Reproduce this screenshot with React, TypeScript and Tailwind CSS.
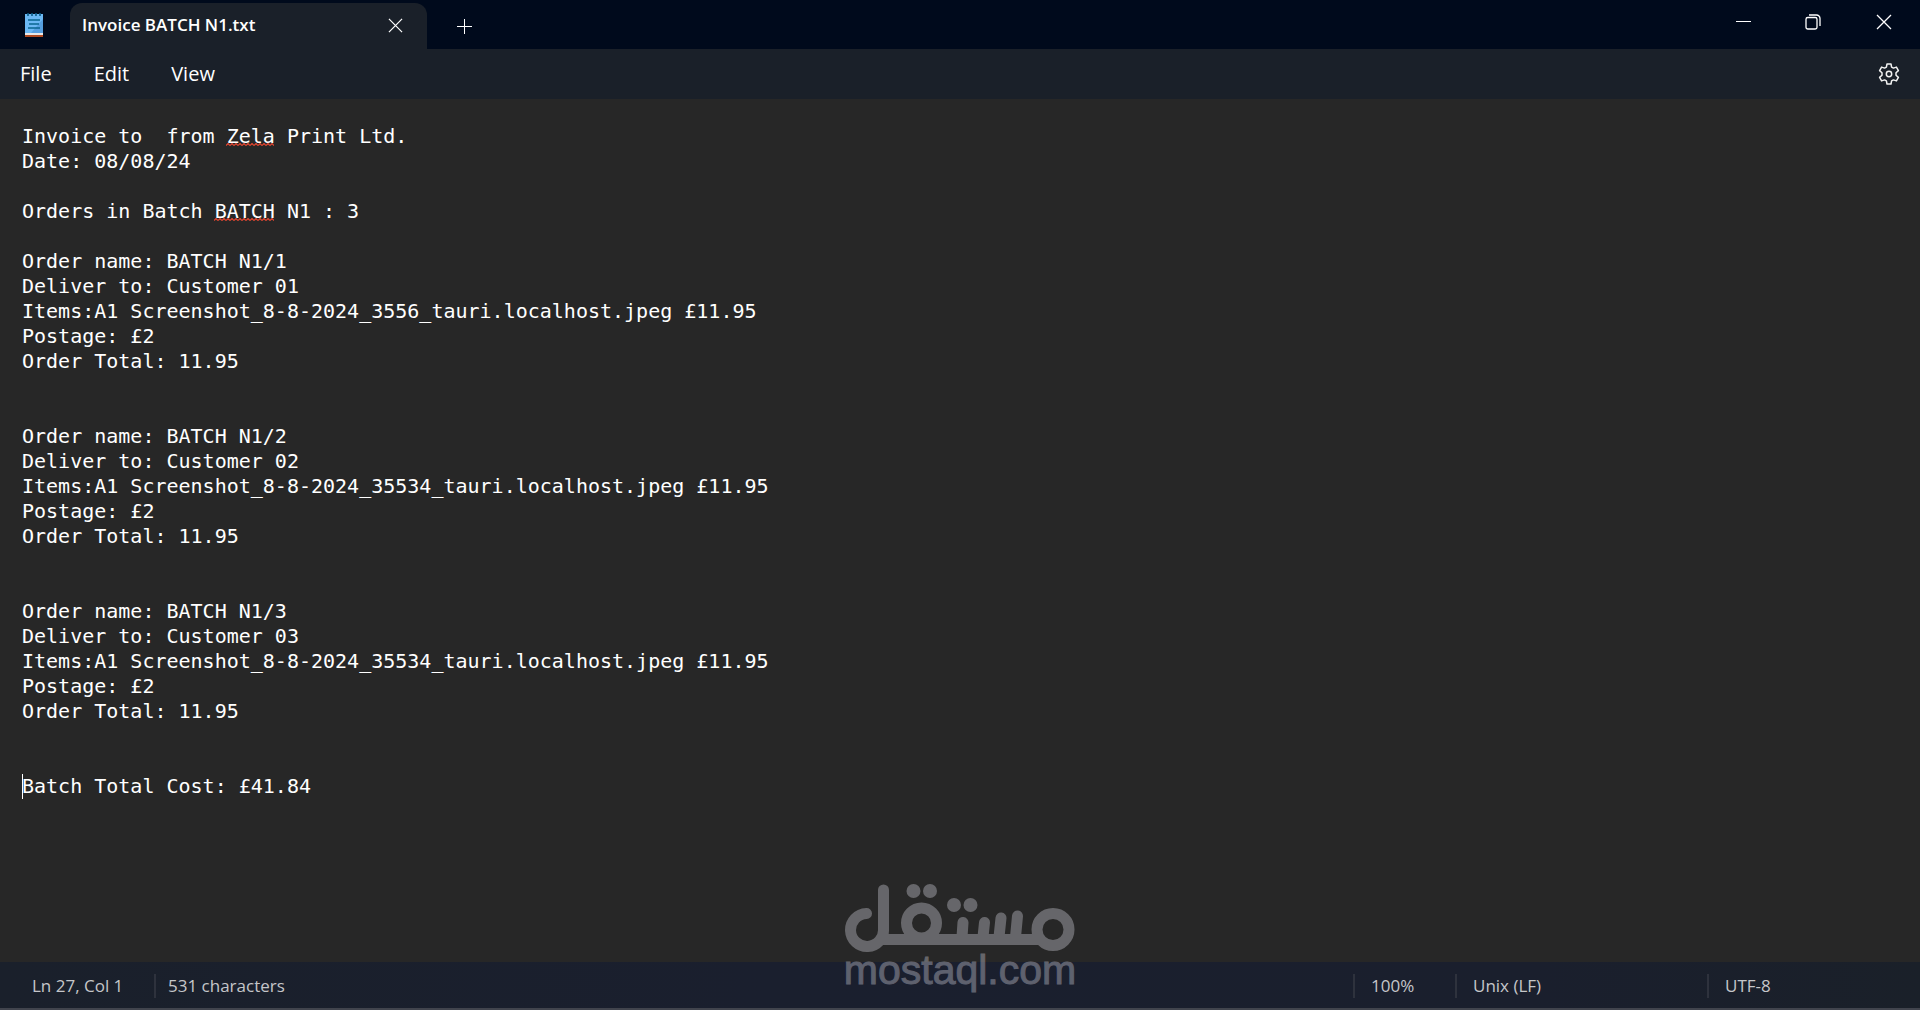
import { useState } from "react";

const orders = [
  { id: 1, customer: "01", file: "Screenshot_8-8-2024_3556_tauri.localhost.jpeg" },
  { id: 2, customer: "02", file: "Screenshot_8-8-2024_35534_tauri.localhost.jpeg" },
  { id: 3, customer: "03", file: "Screenshot_8-8-2024_35534_tauri.localhost.jpeg" },
];

const documentText = [
  "Invoice to  from Zela Print Ltd.",
  "Date: 08/08/24",
  "",
  "Orders in Batch BATCH N1 : 3",
  "",
  ...orders.flatMap((o) => [
    `Order name: BATCH N1/${o.id}`,
    `Deliver to: Customer ${o.customer}`,
    `Items:A1 ${o.file} £11.95`,
    "Postage: £2",
    "Order Total: 11.95",
    "",
    "",
  ]),
  "Batch Total Cost: £41.84",
].join("\n");

const LINE = 25;
const CHAR = 12;
const misspelled = [
  { line: 0, column: 17, length: 4 },
  { line: 3, column: 16, length: 5 },
];
const caret = { line: 26, column: 0 };

function NotepadIcon() {
  return (
    <svg width="18" height="24" viewBox="0 0 18 24" aria-hidden="true">
      <rect x="0" y="1" width="18" height="20" fill="#6bb8f4" />
      <path d="M18 6v14H6z" fill="#559fe0" />
      <path d="M3 0v3M7 0v3M11 0v3M15 0v3" stroke="#0b5c86" strokeWidth="1.6" />
      <path d="M3 7h12M4 11h10M3 15h12" stroke="#0a6690" strokeWidth="1.7" />
      <rect x="0" y="20" width="18" height="2" fill="#e8e8e8" />
      <rect x="0" y="22" width="18" height="2" fill="#b04a20" />
    </svg>
  );
}

function CloseIcon({ size }: { size: number }) {
  return (
    <svg width={size} height={size} viewBox="0 0 16 16" fill="none" stroke="#fff" strokeWidth="1.3" aria-hidden="true">
      <path d="M1 1l14 14M15 1L1 15" />
    </svg>
  );
}

function GearIcon() {
  return (
    <svg width="22" height="22" viewBox="0 0 22 22" fill="none" stroke="#f2f2f2" strokeWidth="1.5" strokeLinejoin="round" aria-hidden="true">
      <path d="M9 1h4l.6 3.1 1.8 1 3-1 2 3.5-2.4 2.1v2.6l2.4 2.1-2 3.5-3-1-1.8 1L13 21H9l-.6-3.1-1.8-1-3 1-2-3.5L4 12.3V9.7L1.6 7.6l2-3.5 3 1 1.800-1z" />
      <circle cx="11" cy="11" r="2.7" />
    </svg>
  );
}

function Watermark() {
  return (
    <div className="pointer-events-none absolute inset-x-0 bottom-5 flex flex-col items-center text-[#dcdce6] opacity-35">
      <svg className="-mb-0.5" width="230" height="68" viewBox="0 0 230 68" fill="none" stroke="currentColor" strokeWidth="11" strokeLinecap="round" aria-hidden="true">
        <path d="M21.5 29.5A16.5 16.5 0 1 0 38.5 45V6" />
        <path d="M33 55.5H197" strokeLinecap="butt" />
        <circle cx="76.5" cy="39" r="15" />
        <circle cx="208" cy="45.5" r="16" />
        <path d="M117 53l1-14.5M138 53l1.5-14.5M154 53l2-19M170.5 53l2-21" />
        <g fill="currentColor" stroke="none">
          <circle cx="68.5" cy="7" r="7" />
          <circle cx="85" cy="7" r="7" />
          <circle cx="109" cy="21" r="7" />
          <circle cx="125.5" cy="21" r="7" />
        </g>
      </svg>
      <span className="font-['Liberation_Sans',sans-serif] text-[41px] leading-10 [-webkit-text-stroke:1px_currentColor]">mostaql.com</span>
    </div>
  );
}

export default function App() {
  const [text, setText] = useState(documentText);
  return (
    <div className="relative flex min-h-screen flex-col bg-[#272727] font-['Open_Sans',sans-serif] text-white">
      <header className="flex h-[49px] shrink-0 bg-[#000a1c]">
        <div className="flex w-[70px] items-center pl-[25px]">
          <NotepadIcon />
        </div>
        <div role="tablist" className="mt-[3px] flex w-[357px] items-center rounded-t-xl bg-[#1a2029] pr-6 pb-0.5 pl-3">
          <button role="tab" aria-selected="true" className="flex-1 text-left text-[17px] leading-6 font-semibold whitespace-nowrap">
            Invoice BATCH N1.txt
          </button>
          <button aria-label="Close tab">
            <CloseIcon size={15} />
          </button>
        </div>
        <button aria-label="New tab" className="flex w-[74px] items-center justify-center pt-1">
          <svg width="15" height="15" viewBox="0 0 15 15" stroke="#fff" strokeWidth="1" aria-hidden="true">
            <path d="M0 7.5h15M7.5 0v15" />
          </svg>
        </button>
        <div className="ml-auto flex pb-[6px]">
          <button aria-label="Minimize" className="flex w-[70px] items-center justify-center">
            <svg width="15" height="15" viewBox="0 0 15 15" stroke="#fff" aria-hidden="true">
              <path d="M0 7.5h15" />
            </svg>
          </button>
          <button aria-label="Restore" className="flex w-[70px] items-center justify-center">
            <svg width="16" height="16" viewBox="0 0 16 16" fill="none" stroke="#fff" strokeWidth="1.3" aria-hidden="true">
              <rect x="1" y="3.5" width="11" height="11.5" rx="1.8" />
              <path d="M4 1h7.5A3.5 3.5 0 0 1 15 4.5V12" />
            </svg>
          </button>
          <button aria-label="Close" className="flex w-[72px] items-center justify-center">
            <CloseIcon size={16} />
          </button>
        </div>
      </header>

      <nav aria-label="Menu" className="flex h-[50px] shrink-0 items-center bg-[#1a2029] px-5 text-[20px] leading-6">
        <div className="flex gap-[42px]">
          <button>File</button>
          <button>Edit</button>
          <button>View</button>
        </div>
        <button aria-label="Settings" className="ml-auto">
          <GearIcon />
        </button>
      </nav>

      <main className="flex flex-1 flex-col px-[22px] pt-[25px]">
        <div className="relative flex flex-1">
          <textarea
            aria-label="Text editor"
            spellCheck={false}
            value={text}
            onChange={(e) => setText(e.target.value)}
            className="block flex-1 resize-none overflow-hidden bg-transparent font-['DejaVu_Sans_Mono',monospace] text-[20px] leading-[25px] whitespace-pre outline-none"
          />
          {misspelled.map((m) => (
            <svg
              key={m.line}
              height="3"
              className="pointer-events-none absolute"
              style={{ left: m.column * CHAR, top: m.line * LINE + 19, width: m.length * CHAR }}
              aria-hidden="true"
            >
              <defs>
                <pattern id={`squiggle-${m.line}`} width="4" height="3" patternUnits="userSpaceOnUse">
                  <path d="M0 2.5l2-2 2 2" fill="none" stroke="#e5452f" strokeWidth="1.2" />
                </pattern>
              </defs>
              <rect width="100%" height="3" fill={`url(#squiggle-${m.line})`} />
            </svg>
          ))}
          <span
            className="pointer-events-none absolute h-[25px] w-px bg-white"
            style={{ left: caret.column * CHAR, top: caret.line * LINE }}
          />
        </div>
      </main>

      <footer className="flex h-12 shrink-0 items-center border-b-2 border-[#41444d] bg-[linear-gradient(90deg,#1a202b,#1a1f2e_40%,#1a1f2d_80%,#1a2029)] pt-0.5 text-[17px] leading-6 text-[#c5c6c9]">
        <span className="w-[154px] pl-8">Ln 27, Col 1</span>
        <span className="border-l-2 border-[#2e323d] pl-3">531 characters</span>
        <span className="ml-auto w-[102px] border-l-2 border-[#2e323d] pl-4">100%</span>
        <span className="w-[252px] border-l-2 border-[#2e323d] pl-4">Unix (LF)</span>
        <span className="w-[213px] border-l-2 border-[#2e323d] pl-4">UTF-8</span>
      </footer>

      <Watermark />
    </div>
  );
}
